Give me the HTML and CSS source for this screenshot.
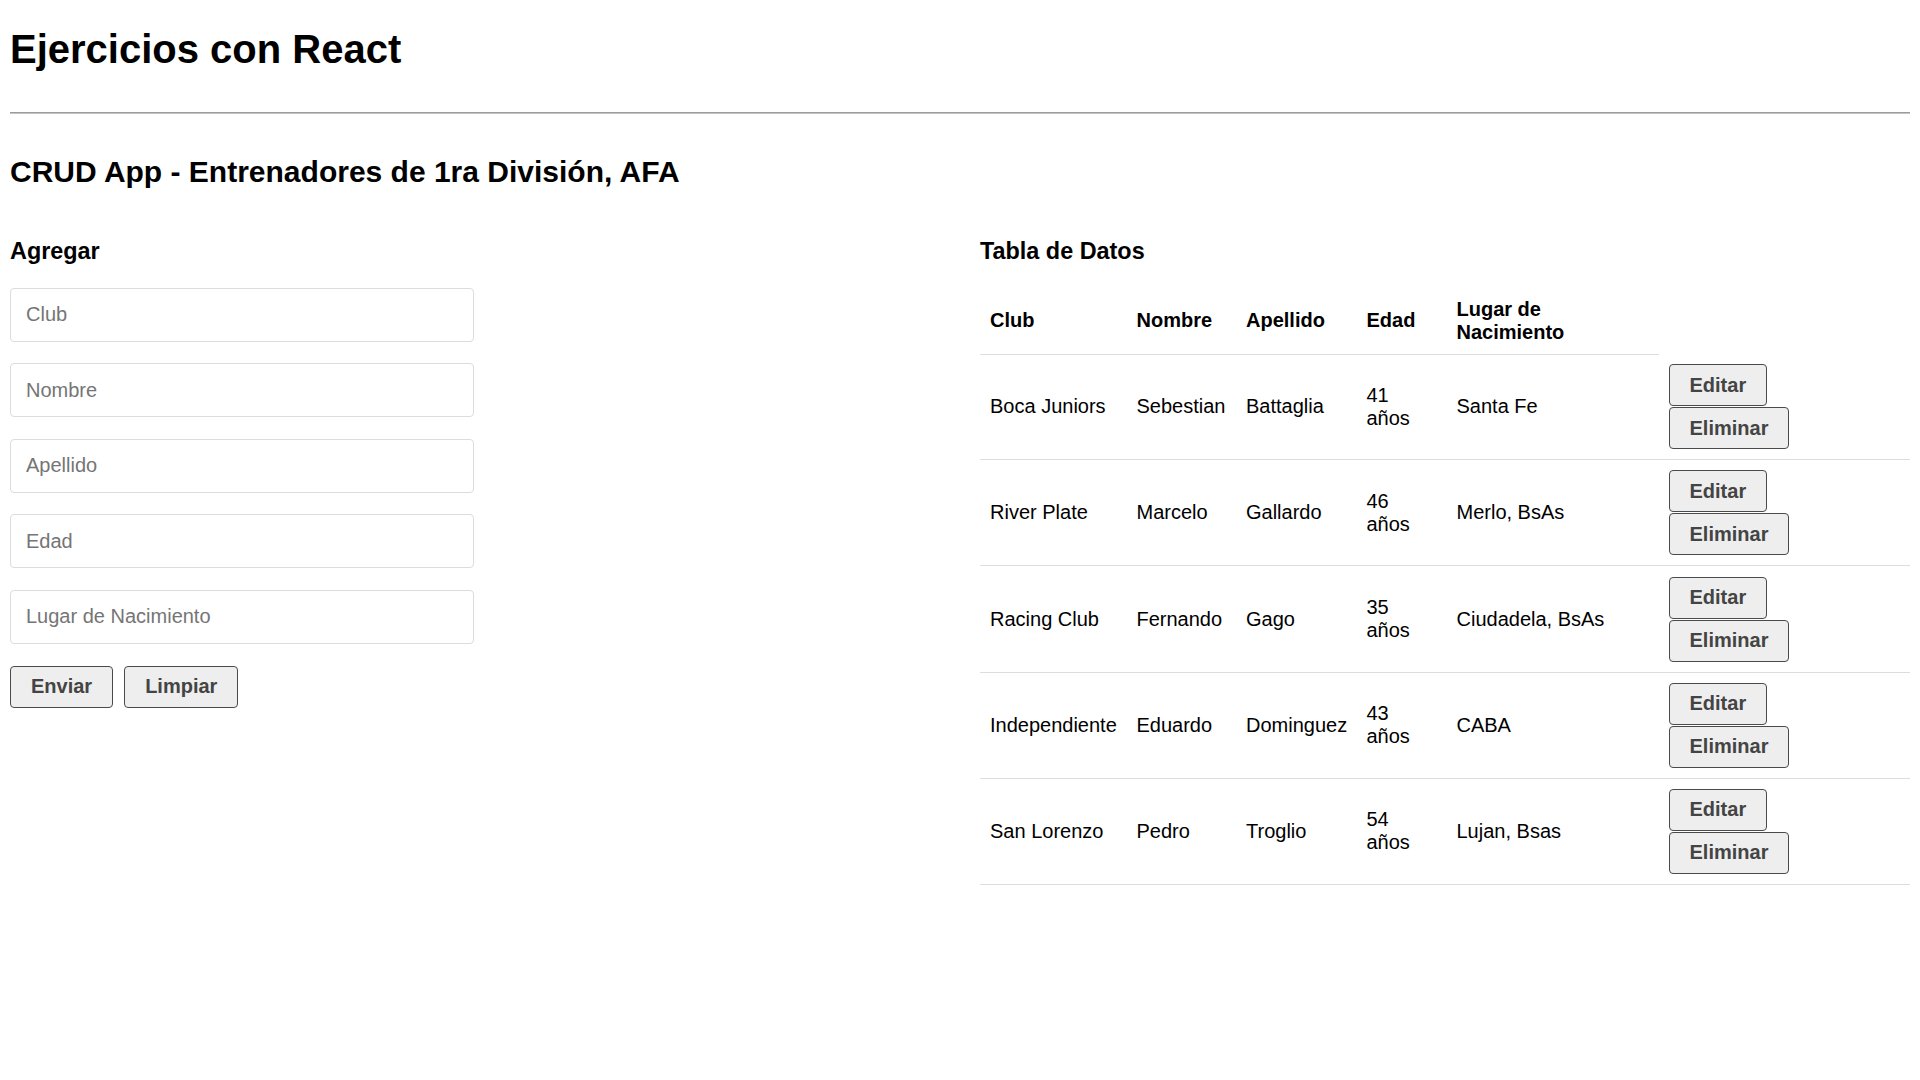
FILE: index.html
```html
<!DOCTYPE html>
<html lang="es">
<head>
<meta charset="utf-8">
<title>Ejercicios con React</title>
<link rel="stylesheet" href="styles.css">
</head>
<body>
<div class="page">
  <h1 class="title">Ejercicios con React</h1>
  <hr class="divider">
  <h2 class="subtitle">CRUD App - Entrenadores de 1ra División, AFA</h2>
  <div class="cols">
    <div class="col">
      <h3 class="section-title">Agregar</h3>
      <form class="form">
        <input class="field" type="text" placeholder="Club">
        <input class="field" type="text" placeholder="Nombre">
        <input class="field" type="text" placeholder="Apellido">
        <input class="field" type="text" placeholder="Edad">
        <input class="field" type="text" placeholder="Lugar de Nacimiento">
        <div class="form-actions">
          <button class="btn" type="button">Enviar</button>
          <button class="btn" type="button">Limpiar</button>
        </div>
      </form>
    </div>
    <div class="col">
      <h3 class="section-title">Tabla de Datos</h3>
      <table class="data">
        <colgroup>
          <col class="c-club"><col class="c-nombre"><col class="c-apellido"><col class="c-edad"><col class="c-lugar"><col class="c-acc">
        </colgroup>
        <thead>
          <tr><th>Club</th><th>Nombre</th><th>Apellido</th><th>Edad</th><th>Lugar de Nacimiento</th></tr>
        </thead>
        <tbody>
          <tr><td>Boca Juniors</td><td>Sebestian</td><td>Battaglia</td><td>41<br>años</td><td>Santa Fe</td>
            <td><div class="acts"><button class="btn" type="button">Editar</button><button class="btn" type="button">Eliminar</button></div></td></tr>
          <tr><td>River Plate</td><td>Marcelo</td><td>Gallardo</td><td>46<br>años</td><td>Merlo, BsAs</td>
            <td><div class="acts"><button class="btn" type="button">Editar</button><button class="btn" type="button">Eliminar</button></div></td></tr>
          <tr><td>Racing Club</td><td>Fernando</td><td>Gago</td><td>35<br>años</td><td>Ciudadela, BsAs</td>
            <td><div class="acts"><button class="btn" type="button">Editar</button><button class="btn" type="button">Eliminar</button></div></td></tr>
          <tr><td>Independiente</td><td>Eduardo</td><td>Dominguez</td><td>43<br>años</td><td>CABA</td>
            <td><div class="acts"><button class="btn" type="button">Editar</button><button class="btn" type="button">Eliminar</button></div></td></tr>
          <tr><td>San Lorenzo</td><td>Pedro</td><td>Troglio</td><td>54<br>años</td><td>Lujan, Bsas</td>
            <td><div class="acts"><button class="btn" type="button">Editar</button><button class="btn" type="button">Eliminar</button></div></td></tr>
        </tbody>
      </table>
    </div>
  </div>
</div>
</body>
</html>
```

FILE: styles.css
```css
html, body {
  margin: 0;
  padding: 0;
  background: #fff;
}
body {
  font-family: "Liberation Sans", Arial, sans-serif;
  font-size: 20px;
  color: #000;
}
.page {
  padding: 0 10px;
}
.title {
  font-size: 40px;
  font-weight: bold;
  line-height: normal;
  margin: 26.8px 0 0;
}
.divider {
  margin: 39.8px 0 0;
  height: 0;
  border: 0;
  border-top: 1px solid #9c9c9c;
  border-bottom: 1px solid #c4c4c4;
}
.subtitle {
  font-size: 30px;
  font-weight: bold;
  line-height: normal;
  margin: 41.2px 0 0;
}
.cols {
  display: flex;
  gap: 40px;
  align-items: flex-start;
}
.col {
  flex: 1 1 0;
  min-width: 0;
}
.section-title {
  font-size: 23.4px;
  font-weight: bold;
  line-height: normal;
  margin: 48.8px 0 23px;
}
.form {
  display: flex;
  flex-direction: column;
  align-items: flex-start;
  margin: 0;
}
.field {
  box-sizing: border-box;
  width: 464px;
  height: 54px;
  margin: 0 0 21.6px;
  padding: 0 15px;
  border: 1px solid #dcdcdc;
  border-radius: 4px;
  font-family: "Liberation Sans", Arial, sans-serif;
  font-size: 20px;
  color: #000;
  background: #fff;
  outline: none;
}
.field::placeholder {
  color: #757575;
}
.form-actions {
  display: flex;
  gap: 11px;
}
.btn {
  box-sizing: border-box;
  height: 42px;
  padding: 0 20px;
  border: 1px solid #4a4a4a;
  border-radius: 4px;
  background: #eeeeee;
  color: #444;
  font-family: "Liberation Sans", Arial, sans-serif;
  font-size: 20px;
  font-weight: bold;
  line-height: 23px;
  cursor: pointer;
}
.data {
  width: 100%;
  table-layout: fixed;
  border-collapse: collapse;
  border-spacing: 0;
}
.c-club { width: 146.5px; }
.c-nombre { width: 109.5px; }
.c-apellido { width: 120.5px; }
.c-edad { width: 90px; }
.c-lugar { width: 212px; }
.c-acc { width: 251.5px; }
.data th {
  text-align: left;
  font-weight: bold;
  padding: 10px;
  border-bottom: 1px solid #dddddd;
  vertical-align: middle;
  line-height: 23px;
}
.data td {
  padding: 10.1px 10px;
  border-bottom: 1px solid #dddddd;
  vertical-align: middle;
  line-height: 23px;
  white-space: nowrap;
}
.acts {
  display: flex;
  flex-direction: column;
  align-items: flex-start;
  gap: 1px;
}
```
